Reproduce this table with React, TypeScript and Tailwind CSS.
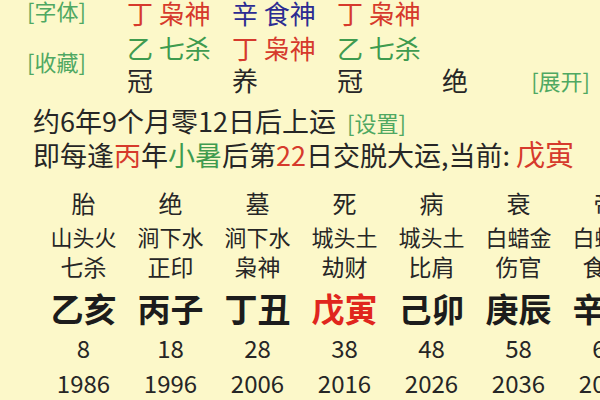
import React from "react";

const font = { fontFamily: '"Noto Sans CJK SC", "Noto Sans", sans-serif' };

type Col = { stage: string; nayin: string; god: string; pillar: string; age: string; year: string; red?: boolean };

const cols: Col[] = [
  { stage: "胎", nayin: "山头火", god: "七杀", pillar: "乙亥", age: "8", year: "1986" },
  { stage: "绝", nayin: "涧下水", god: "正印", pillar: "丙子", age: "18", year: "1996" },
  { stage: "墓", nayin: "涧下水", god: "枭神", pillar: "丁丑", age: "28", year: "2006" },
  { stage: "死", nayin: "城头土", god: "劫财", pillar: "戊寅", age: "38", year: "2016", red: true },
  { stage: "病", nayin: "城头土", god: "比肩", pillar: "己卯", age: "48", year: "2026" },
  { stage: "衰", nayin: "白蜡金", god: "伤官", pillar: "庚辰", age: "58", year: "2036" },
  { stage: "帝", nayin: "白蜡金", god: "食神", pillar: "辛巳", age: "68", year: "2046" },
  { stage: "临", nayin: "长流水", god: "正财", pillar: "壬午", age: "78", year: "2056" },
];

export default function App() {
  return (
    <div className="w-[600px] h-[400px] overflow-hidden bg-[#fcf8c9] text-[#262626] whitespace-nowrap" style={font}>
      {/* Top hidden-stems section */}
      <div className="flex pl-[27px]">
        <div className="w-[100px] shrink-0 text-[22px] text-[#4fa862]">
          <div className="h-[20px] leading-[20px]">[字体]</div>
          <div className="mt-[31px] h-[20px] leading-[20px]">[收藏]</div>
        </div>
        <div className="flex-1 text-[26px]">
          <div className="flex h-[26px] leading-[26px]">
            <div className="w-[105px] text-[#d63a2c]">丁 枭神</div>
            <div className="w-[105px] text-[#2c2c92]">辛 食神</div>
            <div className="w-[105px] text-[#d63a2c]">丁 枭神</div>
          </div>
          <div className="flex mt-[6px] h-[32px] leading-[32px]">
            <div className="w-[105px] text-[#3f9b4f]">乙 七杀</div>
            <div className="w-[105px] text-[#d63a2c]">丁 枭神</div>
            <div className="w-[105px] text-[#3f9b4f]">乙 七杀</div>
          </div>
          <div className="flex h-[32px] leading-[32px] pr-[10px]">
            <div className="w-[105px]">冠</div>
            <div className="w-[105px]">养</div>
            <div className="w-[105px]">冠</div>
            <div>绝</div>
            <div className="ml-auto text-[22px] text-[#4fa862]">[展开]</div>
          </div>
        </div>
      </div>

      {/* Start-luck lines */}
      <div className="pl-[33px] mt-[9px] text-[27px]">
        <div className="h-[32px] leading-[32px]">
          约6年9个月零12日后上运
          <span className="ml-[11px] text-[22px] text-[#4fa862]">[设置]</span>
        </div>
        <div className="h-[32px] leading-[32px]">
          即每逢<span className="text-[#d63a2c]">丙</span>年<span className="text-[#3f9b4f]">小暑</span>后第<span className="text-[#d63a2c]">22</span>日交脱大运,当前:{" "}
          <span className="text-[29px] text-[#d63a2c]">戊寅</span>
        </div>
      </div>

      {/* Luck pillars */}
      <div className="flex pl-[40px] mt-[19px]">
        {cols.map((c) => (
          <div key={c.year} className="w-[87px] shrink-0 flex flex-col items-center">
            <div className="h-[30px] leading-[30px] text-[24px]">{c.stage}</div>
            <div className="h-[36px] leading-[36px] text-[22px]">{c.nayin}</div>
            <div className="h-[24px] leading-[24px] text-[23px]">{c.god}</div>
            <div className={`h-[60px] leading-[60px] text-[33px] font-bold ${c.red ? "text-[#e0261d]" : "text-[#1c1c1c]"}`}>{c.pillar}</div>
            <div className="h-[20px] leading-[20px] text-[24px]">{c.age}</div>
            <div className="h-[50px] leading-[50px] text-[24px]">{c.year}</div>
          </div>
        ))}
      </div>
    </div>
  );
}
